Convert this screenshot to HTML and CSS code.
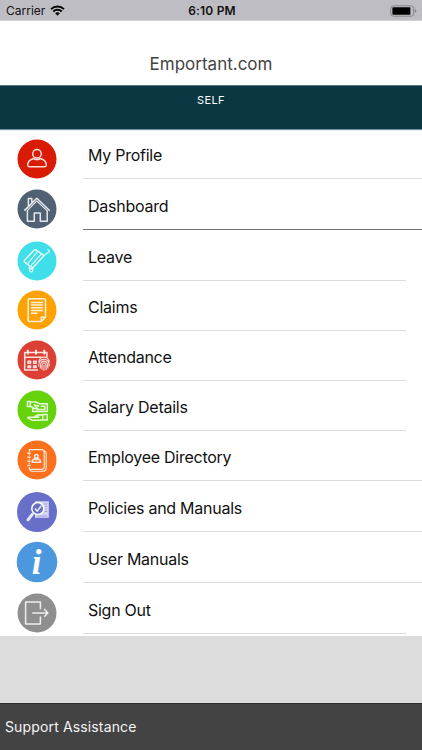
FILE: index.html
```
<!DOCTYPE html>
<html lang="en">
  <head>
    <meta charset="UTF-8" />
    <title>Emportant.com</title>
    <link rel="stylesheet" href="styles.css">
  </head>
  <body>
    <!-- Status bar -->
    <div class="status-bar">
      <div class="carrier">
        <span>Carrier</span>
        <svg class="wifi" viewBox="0 0 15 11">
          <path d="M1 4.1a9.4 9.4 0 0 1 13 0M3.3 6.5a6.1 6.1 0 0 1 8.4 0" />
          <path class="solid" d="M5.1 8.3a3.5 3.5 0 0 1 4.8 0L7.5 10.7z" />
        </svg>
      </div>
      <div class="time">6:10 PM</div>
      <div class="battery">
        <svg viewBox="0 0 27 12">
          <rect class="case" x="0.8" y="0.8" width="22.8" height="10.4" rx="2.5" />
          <rect x="2.4" y="2.3" width="18" height="7.4" rx="0.6" />
          <path class="tip" d="M24.8 4v4q1.6-.5 1.6-2t-1.6-2z" />
        </svg>
      </div>
    </div>

    <header class="title">Emportant.com</header>
    <div class="tab">SELF</div>

    <!-- Menu -->
    <ul class="menu">
      <li class="item first full">
        <svg class="icon profile" viewBox="0 0 40 40">
          <circle class="disc" cx="20" cy="20" r="19.5" />
          <circle cx="20" cy="14.8" r="4.3" />
          <path d="M16.5 19.5c-3.8 1.2-5.8 3.6-5.8 6.6 0 1.2.6 1.6 1.7 1.6h15.2c1.1 0 1.7-.4 1.7-1.6 0-3-2-5.4-5.8-6.6-2 1.2-5 1.2-7 0z" />
        </svg>
        <span>My Profile</span>
      </li>
      <li class="item tall full selected">
        <svg class="icon dashboard" viewBox="0 0 40 40">
          <circle class="disc" cx="20" cy="20" r="19.5" />
          <path d="M7.3 21.6L19.8 9.2l13 12.6M10.4 21v11.3h6.9V24h6v8.3h6.9V21.2M11.4 17V9.6h3.4v3.8" />
          <path class="thin" d="M10.6 21.2l9.2-9.2 10.2 9.6" />
        </svg>
        <span>Dashboard</span>
      </li>
      <li class="item tall">
        <svg class="icon leave" viewBox="0 0 40 40">
          <circle class="disc" cx="20" cy="20" r="19.5" />
          <path d="M17 9.3q1.3-1 2.6 0l6.2 4.3q1.2 1 .2 2.2l-9.3 9.9q-1.2 1.2-2.5.2l-6.3-4.6q-1.3-1-.1-2.4z" />
          <path class="thin" d="M20.7 10.4L10.8 22.4M24.4 12.8L14 24.6M26.5 15l6-4.8-2-2.2M12.4 25.6l-.4 2.2 3.7.4.7-2.2" />
          <circle class="thin" cx="14.2" cy="29.2" r="1.7" />
        </svg>
        <span>Leave</span>
      </li>
      <li class="item">
        <svg class="icon claims" viewBox="0 0 40 40">
          <circle class="disc" cx="20" cy="20" r="19.5" />
          <path d="M12.4 8.8h14.9q1.2 0 1.2 1.2v17.2l-4.2 4.2H12.4q-1.2 0-1.2-1.2V10q0-1.2 1.2-1.2zM24.3 31v-3.8h4" />
          <path d="M14 12.4h12M14 15.1h12M14 17.8h12M14 20.5h12M14 23.2h6.5" />
        </svg>
        <span>Claims</span>
      </li>
      <li class="item">
        <svg class="icon attendance" viewBox="0 0 40 40">
          <circle class="disc" cx="20" cy="20" r="19.5" />
          <path d="M21 30H7.7V12.6h22.2v4.6H7.7" />
          <path class="heavy" d="M10.8 9.8v4.6M19 9.8v4.6M27.3 9.8v4.6" />
          <path d="M11 21.2h2.6v2H11zM16.6 21.2h2.6v2h-2.6zM11 26h2.6v1.4H11zM16.6 26h2.6v1.4h-2.6z" />
          <ellipse class="cover" cx="27" cy="23.8" rx="6.2" ry="7.2" />
          <path class="thin" d="M21.6 22q1-4.8 5.4-4.8t5.4 4.8M21.6 26.5q.2-7.3 5.4-7.3t5.4 7.1M23.3 28.5q-.4-7.4 3.7-7.4t3.9 7.4M25 29.8q-.5-6.8 2-6.8t2.2 7M27 25v5.8" />
        </svg>
        <span>Attendance</span>
      </li>
      <li class="item">
        <svg class="icon salary" viewBox="0 0 40 40">
          <circle class="disc" cx="20" cy="20" r="19.5" />
          <path d="M10.4 11.6h2.8v4.8h-2.8zM13.2 11.9h5.5l3.6 1.8h8v7.9H15.7v-3.8M13.2 16.2l3.8 2.2h3.5l-3.2-3.4 4.8 1.2M19.4 19.4h8.4v-3.2h-4" />
          <path d="M30.2 24.6v5.4h-4.4v-5.4zM25.8 25.1l-5.2-.3-2.6 1.5 3.9.9H11.5q-1 0-.7.7l4.2 2.3h8l2.8-.7" />
        </svg>
        <span>Salary Details</span>
      </li>
      <li class="item full">
        <svg class="icon employee" viewBox="0 0 40 40">
          <circle class="disc" cx="20" cy="20" r="19.5" />
          <path class="thin" d="M12.3 12V9.6h12.4q2.5 0 2.5 2.5v14.8q0 2.5-2.5 2.5H12.3V27M12.3 15.5v-1M12.3 19.8v-1.2M12.3 24v-1.2M27 10.8q2.2.4 2.2 2.6v14.8q0 3-3 3H14.8q-1.5 0-2-1.5" />
          <path d="M10.3 13.2h3.4M10.3 17.2h3.4M10.3 21.3h3.4M10.3 25.5h3.4" />
          <circle cx="19.4" cy="16.2" r="1.8" />
          <path d="M15.2 22.2q.2-3.2 2.8-3.5l1.4 1.2 1.4-1.2q2.6.3 2.8 3.5z" />
        </svg>
        <span>Employee Directory</span>
      </li>
      <li class="item tall full">
        <svg class="icon policies" viewBox="0 0 40 40">
          <circle class="disc" cx="20" cy="20" r="20" />
          <path class="paper" d="M18 9.3h13.8v16.5H18z" />
          <path class="rule" d="M26.7 12h3.6M27.7 14.5h2.6M28 17h2.3M27.7 19.5h2.6M20 24h10.3" />
          <circle class="lens" cx="20.8" cy="16.6" r="6" />
          <path d="M18 16.6l2.2 2.6 4-5.4" />
          <path class="handle" d="M15.3 22.3L11 27.8" />
        </svg>
        <span>Policies and Manuals</span>
      </li>
      <li class="item tall full">
        <svg class="icon info" viewBox="0 0 40 40">
          <circle class="disc" cx="20" cy="20" r="20.3" />
          <text x="19.6" y="32">i</text>
        </svg>
        <span>User Manuals</span>
      </li>
      <li class="item tall last">
        <svg class="icon sign-out" viewBox="0 0 40 40">
          <circle class="disc" cx="20" cy="20" r="19.5" />
          <path d="M23.4 16.3V9H8.6v21.9h14.8v-7.3M15.3 19.9h15M27.2 16l3.7 3.9-3.7 3.9" />
        </svg>
        <span>Sign Out</span>
      </li>
    </ul>

    <footer class="support">Support Assistance</footer>
  </body>
</html>
```
FILE: styles.css
```
* {
  box-sizing: border-box;
}

body {
  display: flex;
  flex-direction: column;
  height: 750px;
  margin: 0;
  font-family: Inter, "Liberation Sans", sans-serif;
  background: #dcdcdc;
  overflow: hidden;
}

/* Status bar */
.status-bar {
  display: grid;
  grid-template-columns: 1fr auto 1fr;
  align-items: center;
  height: 21px;
  padding: 1px 5px 0 6px;
  background: #bfbdc4;
  border-bottom: 1px solid #d2d1d5;
  font-size: 12px;
  color: #111;
}

.carrier {
  display: flex;
  align-items: center;
  gap: 5px;
}

.wifi {
  width: 15px;
  height: 11px;
  fill: none;
  stroke: #000;
  stroke-width: 2;
}

.wifi .solid {
  fill: #000;
  stroke: none;
}

.time {
  padding-left: 1px;
  font-weight: 600;
  letter-spacing: 0.2px;
}

.battery {
  display: flex;
  justify-content: flex-end;
}

.battery svg {
  width: 27px;
  height: 12px;
}

.battery .case {
  fill: none;
  stroke: #858489;
}

.battery .tip {
  fill: #858489;
}

.title {
  height: 64px;
  padding-top: 31px;
  background: #fff;
  color: #444;
  font-size: 17px;
  line-height: 24px;
  text-align: center;
}

.tab {
  height: 45px;
  padding-top: 7px;
  background: #0a3742;
  border-top: 1px solid #58777e;
  border-bottom: 1px solid #75909a;
  color: #fff;
  font-size: 11px;
  line-height: 14px;
  letter-spacing: 0.4px;
  text-align: center;
}

/* Menu list */
.menu {
  height: 506px;
  margin: 0;
  padding: 0;
  background: #fff;
  border-top: 1px solid #e3eff5;
  list-style: none;
}

.item {
  display: grid;
  grid-template-columns: 83px 1fr;
  align-items: end;
  height: 50px;
  padding-right: 16px;
  color: #111;
  font-size: 16px;
  letter-spacing: -0.26px;
}

.item.first {
  height: 48px;
}

.item.tall {
  height: 51px;
}

.item.full {
  padding-right: 0;
}

.item span {
  height: 36px;
  padding-left: 5px;
  border-bottom: 1px solid #dcdcdc;
  line-height: 24px;
}

.item.selected span {
  border-bottom-color: #727272;
}

/* Round icons */
.icon {
  width: 40px;
  height: 40px;
  margin: 0 0 1px 17px;
  overflow: visible;
  fill: none;
  stroke: #fff;
  stroke-opacity: 0.85;
  stroke-width: 1.5;
  stroke-linejoin: round;
}

.first .icon,
.leave {
  margin-bottom: 0.5px;
}

.policies {
  margin-bottom: 0.3px;
}

.icon .disc {
  stroke: none;
}

.icon .thin {
  stroke-width: 1.1;
}

.icon .heavy {
  stroke-width: 2;
}

.profile .disc {
  fill: #d91b06;
}

.dashboard .disc {
  fill: #506173;
}

.leave .disc {
  fill: #3fdfe9;
}

.claims .disc {
  fill: #fca205;
}

.attendance .disc,
.attendance .cover {
  fill: #dc4035;
  stroke: none;
}

.salary .disc {
  fill: #65d20c;
}

.employee .disc {
  fill: #fb701d;
}

.policies .disc {
  fill: #676fc8;
}

.policies .paper {
  fill: #d5d8f3;
  stroke: none;
}

.policies .rule {
  stroke: #8f95d6;
  stroke-width: 1;
}

.policies .lens {
  fill: #676fc8;
  stroke-opacity: 1;
}

.policies .handle {
  stroke-width: 3;
  stroke-linecap: round;
}

.info .disc {
  fill: #4c98df;
}

.info text {
  fill: #fff;
  stroke: none;
  font-family: "Liberation Serif", serif;
  font-size: 35px;
  font-style: italic;
  font-weight: bold;
  text-anchor: middle;
}

.sign-out .disc {
  fill: #8f8f8f;
}

/* Bottom bar */
.support {
  height: 47px;
  margin-top: auto;
  padding: 12px 5px 0;
  background: #434343;
  border-top: 1px solid #2c2c2c;
  color: #f4f4f4;
  font-size: 14px;
  line-height: 22px;
  letter-spacing: 0.14px;
}
```
